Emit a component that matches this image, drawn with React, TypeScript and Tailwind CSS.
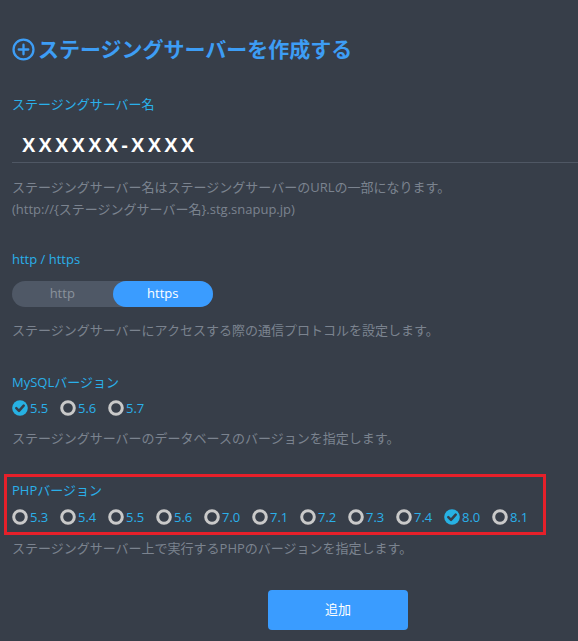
import { useState } from "react";

const mysqlVersions = ["5.5", "5.6", "5.7"];
const phpVersions = ["5.3", "5.4", "5.5", "5.6", "7.0", "7.1", "7.2", "7.3", "7.4", "8.0", "8.1"];

function RadioMark({ checked }: { checked: boolean }) {
  if (checked) {
    return (
      <svg width="16" height="16" viewBox="0 0 16 16" className="shrink-0">
        <circle cx="8" cy="8" r="7.8" fill="#27b1e3" />
        <path d="M4.3 8.2 L7 10.8 L11.7 5.6" fill="none" stroke="#373e49" strokeWidth="2.5" strokeLinecap="round" strokeLinejoin="round" />
      </svg>
    );
  }
  return (
    <svg width="16" height="16" viewBox="0 0 16 16" className="shrink-0">
      <circle cx="8" cy="8" r="6.3" fill="none" stroke="#c9c9c9" strokeWidth="3" />
    </svg>
  );
}

function RadioGroup({ items, initial }: { items: string[]; initial: string }) {
  const [value, setValue] = useState(initial);
  return (
    <div className="flex h-5 items-center">
      {items.map((v) => (
        <button
          key={v}
          onClick={() => setValue(v)}
          className="flex w-12 shrink-0 items-center gap-[2px] text-[13px] text-[#2ab0ea]"
        >
          <RadioMark checked={value === v} />
          <span className="pt-[2px]">{v}</span>
        </button>
      ))}
    </div>
  );
}

export default function App() {
  const [https, setHttps] = useState(true);

  return (
    <div
      className="min-h-screen overflow-hidden bg-[#373e49] pb-10 pl-3 pt-[34px]"
      style={{ fontFamily: "'Open Sans', 'Noto Sans CJK JP', sans-serif" }}
    >
      <h1 className="flex h-[30px] items-center gap-[3px] text-[21px] font-bold leading-none text-[#3d9df5]">
        <svg width="23" height="23" viewBox="0 0 24 24" className="shrink-0">
          <circle cx="12" cy="12" r="10.4" fill="none" stroke="#3d9df5" strokeWidth="2.4" />
          <path d="M12 7v10M7 12h10" stroke="#3d9df5" strokeWidth="2.4" strokeLinecap="round" />
        </svg>
        ステージングサーバーを作成する
      </h1>

      <div className="mt-[30px] h-5 text-[13px] leading-5 text-[#2ab0ea]">ステージングサーバー名</div>
      <div className="mt-[14px] flex h-[35px] items-center border-b border-[#4f5764] pl-[10px] text-[20px] font-semibold tracking-[3.2px] text-white" style={{ fontFamily: "'Liberation Sans', sans-serif" }}>
        XXXXXX-XXXX
      </div>
      <div className="mt-[13px] text-[13px] leading-[22px] text-[#7b838f]">
        ステージングサーバー名はステージングサーバーのURLの一部になります。
        <br />
        <span>(http://{"{"}ステージングサーバー名{"}"}.stg.snapup.jp)</span>
      </div>

      <div className="mt-[29px] h-5 text-[13px] leading-5 text-[#2ab0ea]">http / https</div>
      <div className="mt-3 flex h-[26px] w-[201px] rounded-full bg-[#4f5866] text-[13px]">
        <button
          onClick={() => setHttps(false)}
          className={`flex-1 rounded-full ${!https ? "bg-[#3a9cff] text-white" : "text-[#8a929c]"}`}
        >
          http
        </button>
        <button
          onClick={() => setHttps(true)}
          className={`flex-1 rounded-full ${https ? "bg-[#3a9cff] text-white" : "text-[#8a929c]"}`}
        >
          https
        </button>
      </div>
      <div className="mt-[13px] h-5 text-[13px] leading-5 text-[#7b838f]">
        ステージングサーバーにアクセスする際の通信プロトコルを設定します。
      </div>

      <div className="mt-8 h-5 text-[13px] leading-5 text-[#2ab0ea]">MySQLバージョン</div>
      <div className="mt-[6px]">
        <RadioGroup items={mysqlVersions} initial="5.5" />
      </div>
      <div className="mt-[10px] h-5 text-[13px] leading-5 text-[#7b838f]">
        ステージングサーバーのデータベースのバージョンを指定します。
      </div>

      <div className="ml-[-8px] mt-[26px] w-[542px] border-[3px] border-[#e6202a] pb-[5px] pl-[5px] pt-[3px]">
        <div className="h-5 text-[13px] leading-5 text-[#2ab0ea]">PHPバージョン</div>
        <div className="mt-[7px]">
          <RadioGroup items={phpVersions} initial="8.0" />
        </div>
      </div>
      <div className="mt-[3px] h-5 text-[13px] leading-5 text-[#7b838f]">
        ステージングサーバー上で実行するPHPのバージョンを指定します。
      </div>

      <button className="ml-[256px] mt-8 flex h-10 w-[140px] items-center justify-center rounded bg-[#3a9cff] text-[13px] text-white">
        追加
      </button>
    </div>
  );
}
